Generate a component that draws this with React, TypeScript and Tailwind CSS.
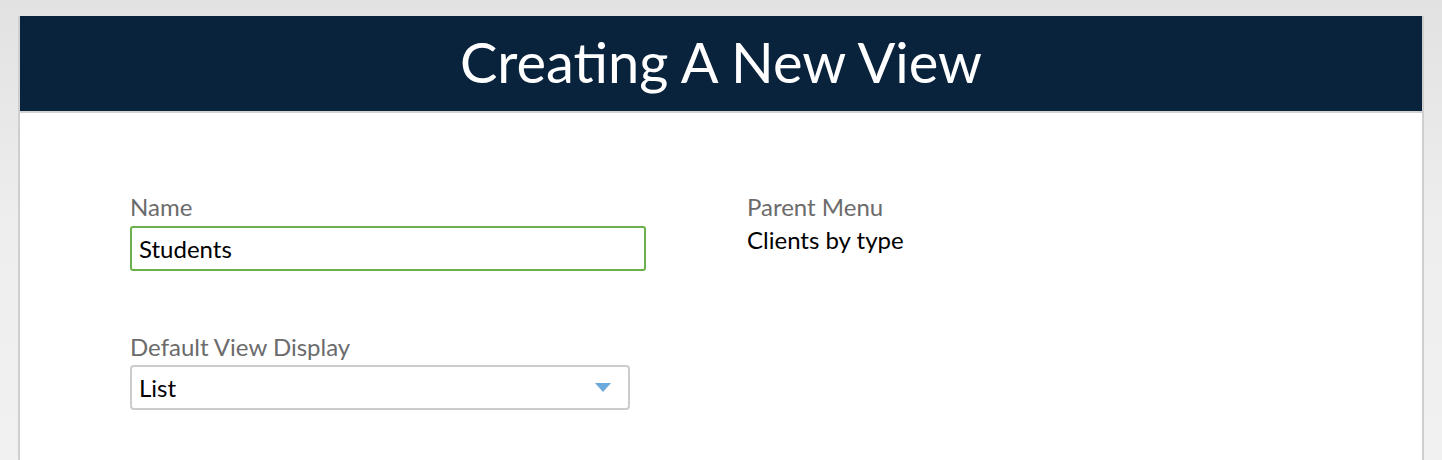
import React from 'react'

const App = () => {
  return (
    <div className="w-[1442px] h-[460px] overflow-hidden bg-gradient-to-b from-[#e2e2e2] via-[#eeeeee] to-[#f1f1f1] pt-[16px] px-[18px] font-['Lato','Noto_Sans',sans-serif]">
      <div className="h-full bg-white border-x-2 border-[#cfcfcf]">
        <header className="h-[97px] bg-[#0a233d] border-b-2 border-[#d3d3d3] flex items-center justify-center">
          <h1 className="text-white text-[56px] leading-none pb-[4px]">Creating A New View</h1>
        </header>

        <main className="grid grid-cols-[516px_1fr] gap-x-[101px] pl-[110px] pt-[80px]">
          <div className="flex flex-col">
            <label className="text-[24px] leading-[27px] text-[#6b6b6b]">Name</label>
            <div className="mt-[6px] h-[45px] border-2 border-[#6ab04c] rounded-[3px] flex items-center pl-[7px] text-[24px] text-black">
              Students
            </div>

            <label className="mt-[62px] text-[24px] leading-[27px] text-[#6b6b6b]">Default View Display</label>
            <div className="mt-[5px] w-[500px] h-[45px] border-2 border-[#cccccc] rounded-[4px] flex items-center justify-between pl-[7px] pr-[17px] text-[24px] text-black">
              <span>List</span>
              <svg width="16" height="9" viewBox="0 0 16 9">
                <polygon points="0,0 16,0 8,9" fill="#6aa9dc" />
              </svg>
            </div>
          </div>

          <div className="flex flex-col">
            <span className="text-[24px] leading-[27px] text-[#6b6b6b]">Parent Menu</span>
            <span className="mt-[6px] text-[24px] leading-[27px] text-black">Clients by type</span>
          </div>
        </main>
      </div>
    </div>
  )
}

export default App
